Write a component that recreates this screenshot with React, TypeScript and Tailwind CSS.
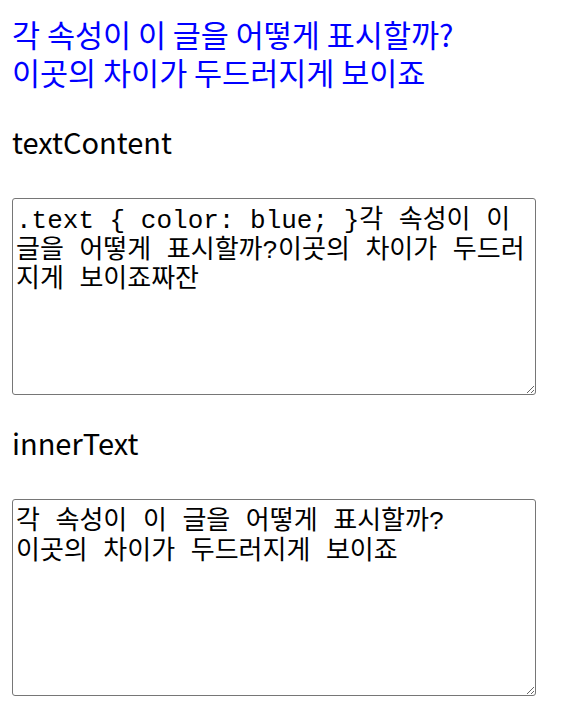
import React from 'react';

const TEXT_CONTENT =
  '.text { color: blue; }각 속성이 이 글을 어떻게 표시할까?이곳의 차이가 두드러지게 보이죠짜잔';
const INNER_TEXT = '각 속성이 이 글을 어떻게 표시할까?\n이곳의 차이가 두드러지게 보이죠';

const Output: React.FC<{ label: string; value: string; first?: boolean }> = ({ label, value, first }) => (
  <section>
    <h3 className={`${first ? 'mt-[31px]' : 'mt-[28px]'} text-[29px] leading-[38px] text-black`}>{label}</h3>
    <textarea
      readOnly
      value={value}
      className="mt-[38px] block w-[524px] h-[197px] rounded-[3px] border border-[#767676] bg-white pl-[3px] pr-[3px] pt-[8px] pb-[2px] text-[26px] leading-[29.5px] text-black resize-y outline-none font-['Liberation_Mono','Noto_Sans_CJK_KR',monospace]"
    />
  </section>
);

const App: React.FC = () => {
  return (
    <div className="min-h-screen bg-white p-3 font-['Noto_Sans_CJK_KR','Noto_Sans',sans-serif]">
      {/* sample text */}
      <p className="mt-[3px] text-[30.5px] leading-[38px] text-[#0000ff]">
        각 속성이 이 글을 어떻게 표시할까?
        <br />
        이곳의 차이가 두드러지게 보이죠
      </p>

      <Output label="textContent" value={TEXT_CONTENT} first />
      <Output label="innerText" value={INNER_TEXT} />
    </div>
  );
};

export default App;
